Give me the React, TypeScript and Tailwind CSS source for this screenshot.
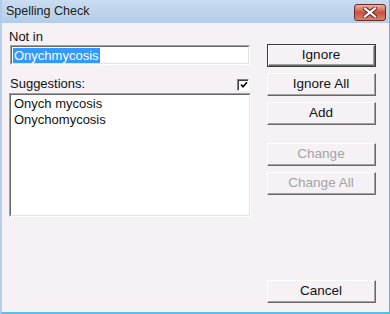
import React from "react";

function Btn({ label, disabled, isDefault }: { label: string; disabled?: boolean; isDefault?: boolean }) {
  const inner = (
    <div className="h-full w-full border-t border-l border-t-white border-l-white border-r border-b border-r-[#696969] border-b-[#696969]">
      <div className="h-full w-full border-r border-b border-r-[#a0a0a0] border-b-[#a0a0a0] bg-[#f5f1f5] flex items-center justify-center">
        <span className={disabled ? "text-[13.5px] leading-none text-[#a3a3a3]" : "text-[13.5px] leading-none text-[#111]"}>{label}</span>
      </div>
    </div>
  );
  return isDefault ? (
    <div className="h-[23px] w-[109px] border border-[#3c3c3c]">{inner}</div>
  ) : (
    <div className="h-[23px] w-[109px]">{inner}</div>
  );
}

export default function App() {
  return (
    <div className="w-[390px] h-[314px] flex flex-col font-['Liberation_Sans',Arial,sans-serif] text-[#111] overflow-hidden">
      {/* Title bar */}
      <div className="h-[23px] shrink-0 flex items-center justify-between pl-[6px] pr-[3px] bg-gradient-to-b from-[#c9dcf0] to-[#b3cde9] border-l-2 border-l-[#b0cbea] border-r border-r-[#5ab7e6]">
        <span className="text-[12.5px] text-[#1a1a1a] leading-none -ml-[2px]">Spelling Check</span>
        <div className="relative w-[32px] h-[17px] mt-[2px] rounded-[3px] border border-[#6e2a26] bg-gradient-to-b from-[#e8b1a4] via-[#c8503f] to-[#d9826c] flex items-center justify-center">
          <svg width="14" height="11" viewBox="0 0 14 11">
            <path d="M2 1.5 L12 9.5 M12 1.5 L2 9.5" stroke="#5a2320" strokeWidth="4" strokeLinecap="square" />
            <path d="M2 1.5 L12 9.5 M12 1.5 L2 9.5" stroke="#ffffff" strokeWidth="2.2" strokeLinecap="square" />
          </svg>
        </div>
      </div>
      {/* Body */}
      <div className="flex-1 flex bg-[#f5f1f5] border-l-2 border-l-[#b6d0ec] border-r border-r-[#4fb4e8] border-b-2 border-b-[#56bfea] pl-[7px] pt-[6px] pb-[9px]">
        {/* Left column */}
        <div className="w-[242px] flex flex-col">
          <div className="text-[13px] leading-[16px] h-[16px]">Not in</div>
          <div className="h-[20px] w-[240px] ml-[1px] border-t border-l border-t-[#a0a0a0] border-l-[#a0a0a0] border-r border-b border-r-white border-b-white">
            <div className="h-full w-full border-t border-l border-t-[#696969] border-l-[#696969] border-r border-b border-r-[#e3e3e3] border-b-[#e3e3e3] bg-white flex items-center pl-[1px]">
              <span className="bg-[#3399ff] text-white text-[13px] leading-[15px] px-[1px]">Onychmycosis</span>
            </div>
          </div>
          <div className="mt-[11px] h-[16px] flex items-center justify-between pr-[2px]">
            <span className="text-[13px] leading-[16px] ml-[1px]">Suggestions:</span>
            <div className="w-[12px] h-[12px] mt-[1px] border-t border-l border-t-[#808080] border-l-[#808080] border-r border-b border-r-white border-b-white">
              <div className="w-full h-full border-t border-l border-t-[#404040] border-l-[#404040] bg-white flex items-center justify-center">
                <svg width="8" height="8" viewBox="0 0 8 8">
                  <path d="M1 3.5 L3 5.8 L7 1.2" stroke="#000" strokeWidth="1.6" fill="none" />
                </svg>
              </div>
            </div>
          </div>
          <div className="mt-[1px] h-[124px] w-[242px] border-t border-l border-t-[#a0a0a0] border-l-[#a0a0a0] border-r border-b border-r-white border-b-white">
            <div className="h-full w-full border-t border-l border-t-[#696969] border-l-[#696969] border-r border-b border-r-[#e3e3e3] border-b-[#e3e3e3] bg-white pl-[3px] pt-[1px]">
              <div className="text-[13px] leading-[16px]">Onych mycosis</div>
              <div className="text-[13px] leading-[16px]">Onychomycosis</div>
            </div>
          </div>
        </div>
        {/* Right column */}
        <div className="ml-[16px] flex flex-col pt-[15px]">
          <Btn label="Ignore" isDefault />
          <div className="mt-[6px]"><Btn label="Ignore All" /></div>
          <div className="mt-[6px]"><Btn label="Add" /></div>
          <div className="mt-[18px]"><Btn label="Change" disabled /></div>
          <div className="mt-[6px]"><Btn label="Change All" disabled /></div>
          <div className="mt-auto"><Btn label="Cancel" /></div>
        </div>
      </div>
    </div>
  );
}
